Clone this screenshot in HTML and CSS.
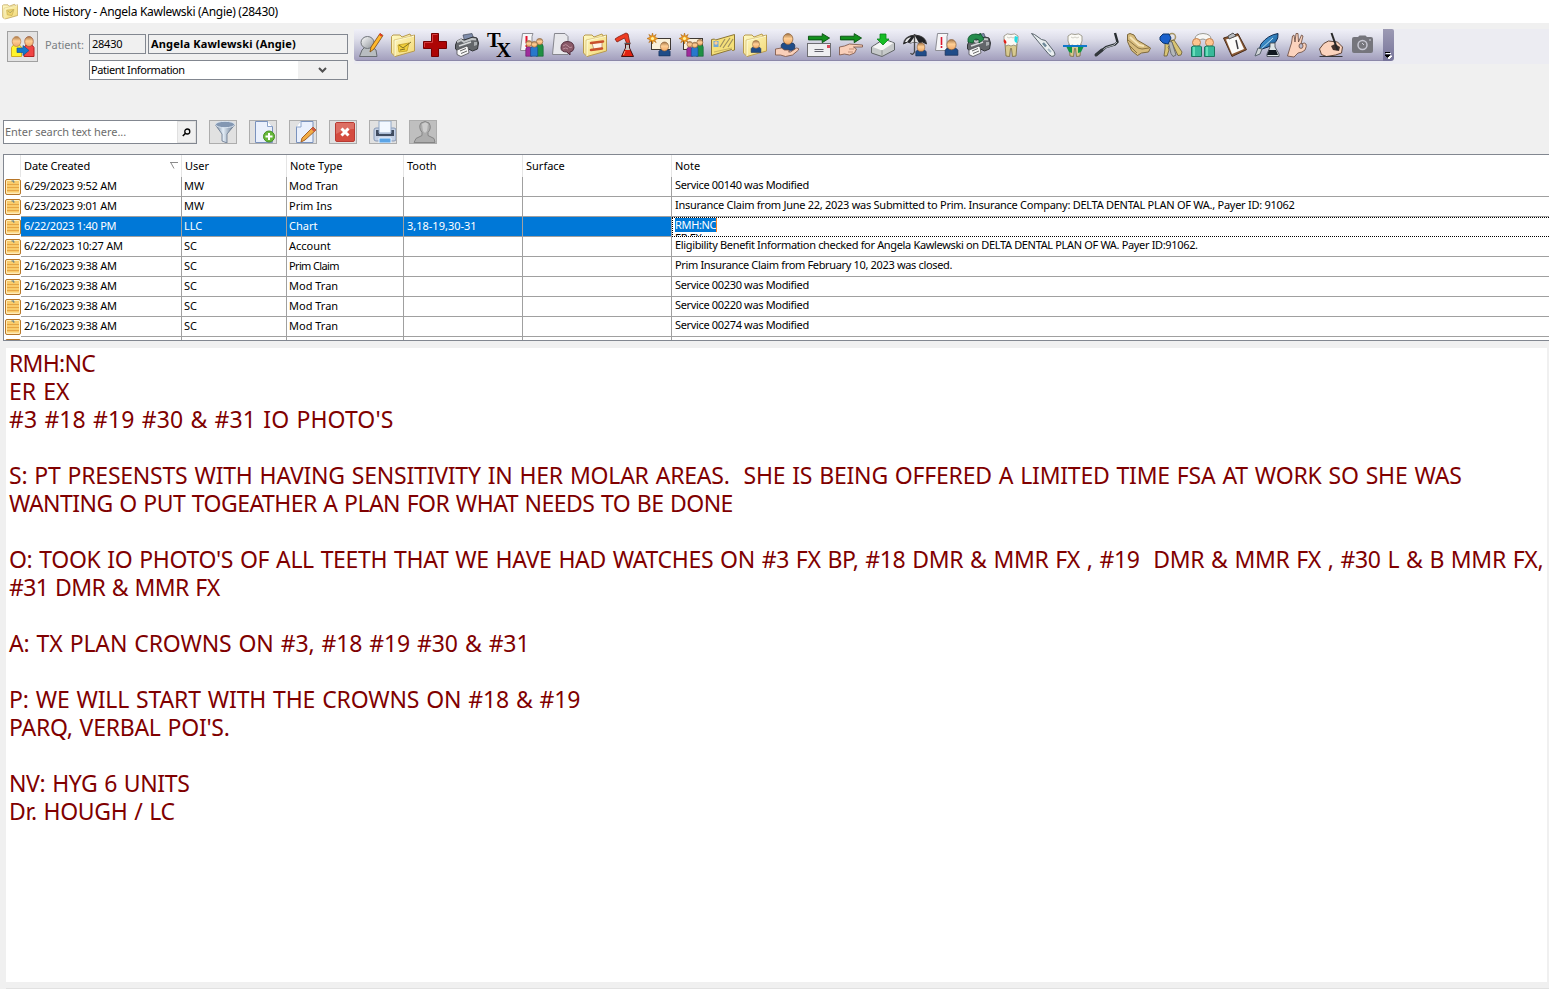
FILE: index.html
```html
<!DOCTYPE html>
<html lang="en">
<head>
<meta charset="utf-8">
<title>Note History</title>
<link rel="stylesheet" href="styles.css">
</head>
<body>
<svg class="defs" width="0" height="0">
  <defs>
    <linearGradient id="gSkin" x1="0" y1="0" x2="0" y2="1"><stop offset="0" stop-color="#a87848"/><stop offset=".45" stop-color="#ffcf95"/><stop offset="1" stop-color="#f0a868"/></linearGradient>
    <linearGradient id="gFold" x1="0" y1="0" x2="1" y2="1"><stop offset="0" stop-color="#fffbc8"/><stop offset="1" stop-color="#f2d774"/></linearGradient>
    <linearGradient id="gGrey" x1="0" y1="0" x2="1" y2="1"><stop offset="0" stop-color="#fff"/><stop offset="1" stop-color="#8d9298"/></linearGradient>
    <linearGradient id="gSteel" x1="0" y1="0" x2="1" y2="0"><stop offset="0" stop-color="#6c7f97"/><stop offset=".4" stop-color="#e3edf7"/><stop offset="1" stop-color="#5d7089"/></linearGradient>
    <linearGradient id="gBlue" x1="0" y1="0" x2="1" y2="1"><stop offset="0" stop-color="#58b8f4"/><stop offset="1" stop-color="#08407c"/></linearGradient>
    <symbol id="folder" viewBox="0 0 24 24"><path d="M.500 3.500L2 2h7l2 2 8-3 1 2 3.500-1v16L4 23.500.500 20z" fill="url(#gFold)" stroke="#b89a4e"/><path d="M4 23V7.500L23 3" fill="none" stroke="#fffde0"/><path d="M3 22V7l18-4" fill="none" stroke="#cdb268" stroke-width=".6"/></symbol>
    <symbol id="person" viewBox="0 0 24 24"><path d="M3 23v-7q1-3 5-3h8q4 0 5 3v7z" fill="#204c88" stroke="#182f55"/><ellipse cx="12" cy="8" rx="6.5" ry="7.2" fill="url(#gSkin)" stroke="#8c6038"/></symbol>
    <symbol id="people" viewBox="0 0 24 24"><g stroke-width=".8"><path d="M1 23v-9q0-3 4-3t4 3v9z" fill="#a02c9c" stroke="#611c66"/><path d="M14 23V11q1-4 5-4t4 4v12z" fill="#209044" stroke="#116030"/><path d="M7 23V13q1-3 5-3t4 3v10z" fill="#2878cc" stroke="#174b84"/><circle cx="5" cy="7" r="3.7" fill="url(#gSkin)" stroke="#8c6038"/><circle cx="18.500" cy="4.500" r="4" fill="url(#gSkin)" stroke="#8c6038"/><circle cx="11.800" cy="8" r="3.700" fill="url(#gSkin)" stroke="#8c6038"/></g></symbol>
    <symbol id="sheet" viewBox="0 0 24 24"><path d="M3.500.500H14l-1 3v14H1.500z" fill="#f6f6f8" stroke="#8d8d94"/></symbol>
    <symbol id="star" viewBox="0 0 12 12"><path d="M6 0l1 3.500L10 1.500 8.500 4.500 12 6 8.500 7.500 10 10.500 7 8.500 6 12 5 8.500 2 10.500 3.500 7.500 0 6l3.500-1.500L2 1.500l3 2z" fill="#f4a020" stroke="#a8600c" stroke-width=".6"/><circle cx="6" cy="6" r="1.700" fill="#fff3a0"/></symbol>
    <symbol id="garrow" viewBox="0 0 24 12"><path d="M.500 3.500h15V.700L23.500 5.500 15.500 10.500V7.500H.500z" fill="#12901c" stroke="#085010"/></symbol>
    <symbol id="printer" viewBox="0 0 24 24"><path d="M8 2l9-1.500 2 6-9 3z" fill="#7f8dab" stroke="#434b5a" stroke-width=".7"/><path d="M.500 12L2 8l4-2 3 1 9-3 4 1 1.500 5-1 6-5 2-4-2-9 3-4-3z" fill="#63666a" stroke="#333539"/><path d="M2 9l4-2 3 2 8-3 4 .500" fill="none" stroke="#c5c8ca" stroke-width="2"/><path d="M4 13l12-4" stroke="#d8dadc" stroke-width="1.500"/><path d="M19 9l3 0v3l-3 1z" fill="#a9adb0"/><path d="M2 17l10-4 1 1 1 6-8 3.500-4-2z" fill="#f8f8f8" stroke="#4c4c50" stroke-width=".8"/><path d="M5 18l6-2.500M6 20.500l6-2.500" stroke="#555" stroke-width=".9"/></symbol>
    <symbol id="tooth" viewBox="0 0 24 24"><path d="M6 11l1 12 3.500.500 1-8h1l1 8 3.500-.500L18 11z" fill="#d8ca90" stroke="#77693c" stroke-width=".8"/><path d="M5 3q3-3.500 7-1.500 4-2 7 1.500 1 5-2 10-2-2-5 0-3-2-5 0Q4 8 5 3z" fill="#fbfaf5" stroke="#8b8878" stroke-width=".8"/><path d="M8 4q2 2 4 0 2 2 4 0" fill="none" stroke="#c5c3b8" stroke-width=".8"/></symbol>
    <symbol id="note" viewBox="0 0 16 16"><rect x=".500" y=".500" width="15" height="15" rx="1.500" fill="#ffedb8" stroke="#b77628"/><rect x="2" y="2" width="12" height="12" fill="#f9cc6c"/><path d="M2 5.500h12M2 8.500h12M2 11.500h12" stroke="#e3a040" stroke-width=".9"/><path d="M2 14h12" stroke="#ffedbb"/><path d="M6.500 2h2.500M8 3h1.500" stroke="#4a7186"/></symbol>
  </defs>
</svg>

<header class="titlebar">
  <svg class="title-icon" viewBox="0 0 24 24"><use href="#folder"/><path d="M7 10l11-1-3 9-7-1z" fill="#efd56e" stroke="#c4a94e"/><path d="M9 11l3 3 5-4" fill="none" stroke="#a59a62" stroke-width="1.200"/></svg>
  <span class="title-text">Note History - Angela Kawlewski (Angie) (28430)</span>
</header>

<section class="top">
  <div class="patient">
    <button class="switch"><svg width="26" height="22" viewBox="0 0 26 22"><path d="M1.500 20.500v-9q1-3 5-3t5 3v9z" fill="#fff42c" stroke="#d1ad24"/><path d="M14 20.500v-9q1-3 5-3t5 3v9z" fill="#f04444" stroke="#af2222"/><ellipse cx="6.500" cy="5.500" rx="4.300" ry="5" fill="url(#gSkin)" stroke="#b9814c" stroke-width=".7"/><ellipse cx="19" cy="5.500" rx="4.300" ry="5" fill="url(#gSkin)" stroke="#9e5538" stroke-width=".7"/><path d="M7 12h6V9.500l6 5-6 5v-3H7z" fill="#1478cc" stroke="#155590" stroke-width=".7"/></svg></button>
    <span class="label">Patient:</span>
    <div class="fields">
      <div class="field-row"><div class="field id">28430</div><div class="field name">Angela Kawlewski (Angie)</div></div>
      <div class="field combo"><span class="combo-text">Patient Information</span><span class="combo-btn"><svg width="9" height="7" viewBox="0 0 9 7"><path d="M1 1l3.500 3.500L8 1" fill="none" stroke="#505050" stroke-width="2"/></svg></span></div>
    </div>
  </div>
  <nav class="toolbar">
    <div class="tools">
      <svg viewBox="0 0 24 24"><path d="M.500 23.500L3 17l3-3h7l4 3 1 6.500z" fill="#b8bdc0" stroke="#676b70"/><ellipse cx="8.500" cy="9.500" rx="6.500" ry="6" fill="url(#gGrey)" stroke="#71757a"/><path d="M21 .500l3 2L15 16l-4 3 1-5z" fill="#ffb82c" stroke="#7a4810" stroke-width=".8"/><path d="M20.500 1l2.500 2" stroke="#e43b26" stroke-width="2"/></svg>
      <svg viewBox="0 0 24 24"><use href="#folder"/><path d="M7 12l11-2-2 8-8 1z" fill="#f0cf3c" stroke="#c19d20" stroke-width=".8"/><path d="M8 12l4 3 8-6M9 17l5-1" fill="none" stroke="#75641e" stroke-width=".9"/></svg>
      <svg viewBox="0 0 24 24"><path d="M8.500.500h7v8h8v7h-8v8h-7v-8h-8v-7h8z" fill="#ad0505" stroke="#740000"/><path d="M9.500 9.500v-8h5M1.500 14v-4.500h8" fill="none" stroke="#d23c3c"/></svg>
      <svg viewBox="0 0 24 24"><use href="#printer"/></svg>
      <svg class="tx" viewBox="0 0 24 24"><text x="0" y="13.500" font-size="20.500">T</text><text x="9" y="24" font-size="21">X</text></svg>
      <svg viewBox="0 0 24 24"><use href="#sheet"/><path d="M7.500 3v7M7.500 12v2" stroke="#e4122c" stroke-width="2"/><use href="#people" x="6" y="5" width="19" height="19"/></svg>
      <svg viewBox="0 0 24 24"><path d="M3.500.500H14l3 3v18H1.500z" fill="#e8e8ec" stroke="#86868e"/><path d="M10 15q0-6 6-6.500 7 0 7 6.500-1 4-4 4l0 3-3-3q-6 0-6-4z" fill="#8a5a68" stroke="#553040"/><path d="M12 13q3-3 5 0t4 1M12 16q3-2 5 0" fill="none" stroke="#bd909e"/></svg>
      <svg viewBox="0 0 24 24"><use href="#folder"/><path d="M9 10l10-1v6l-8 2z" fill="#fff5e8" stroke="#ac7a64" stroke-width=".7"/><path d="M8 10l12-1.500M8 17l11-1.500" stroke="#c9502c" stroke-width="2.500" stroke-linecap="round"/></svg>
      <svg viewBox="0 0 24 24"><path d="M0 6l3-2 8-4 2 1 2 10h-3L9.500 5 2 9z" fill="#ee3c22" stroke="#841c10" stroke-width=".8"/><path d="M10.500 11h4v4l4 8.500H6.500l4-8.500z" fill="#e02010" stroke="#421010"/><path d="M11 12h3v3l1 2h-5l1-2z" fill="#c9c4c0"/><path d="M9.500 10.500h6" stroke="#555" stroke-width="1.500"/><path d="M10 18l-1.500 4" stroke="#ff9c74"/></svg>
      <svg viewBox="0 0 24 24"><rect x="4.500" y="5.500" width="19" height="11" fill="#fbf1da" stroke="#3e3833"/><use href="#star" x="0" y="0" width="11" height="11"/><use href="#person" x="10" y="8" width="15" height="16"/></svg>
      <svg viewBox="0 0 24 24"><rect x="4.500" y="5.500" width="19" height="11" fill="#fbf1da" stroke="#3e3833"/><use href="#star" x="0" y="0" width="11" height="11"/><use href="#people" x="7" y="6" width="18" height="18"/></svg>
      <svg viewBox="0 0 24 24"><path d="M.500 6.500l3-.500 1 1L23.500 1.500V17l-2 .500-1-1L.500 22.500z" fill="#f5e07a" stroke="#8c7634"/><path d="M9 14l5-8M12 15l7-10M17 14l5-8" stroke="#9e9060" stroke-width="1.200"/><path d="M3 19l18-4" stroke="#c9b564"/><rect x="2.500" y="8" width="5" height="6" fill="#72a9d5"/><circle cx="5" cy="10" r="1.700" fill="#ffcf95"/></svg>
      <svg viewBox="0 0 24 24"><use href="#folder"/><use href="#person" x="6" y="7" width="14" height="13"/></svg>
      <svg viewBox="0 0 24 24"><use href="#person" x="4" y="-.500" width="18" height="19"/><path d="M.500 16l6-1 3 2h4q2 1 0 2h2l6-4q3 0 2 2l-6 5-7 1.500-5-1.500H.500z" fill="#f9cfb9" stroke="#795040" stroke-width=".8"/></svg>
      <svg viewBox="0 0 24 24"><use href="#garrow" x="0" y="0" width="24" height="11"/><rect x=".500" y="10.500" width="23" height="13" fill="#eeeef0" stroke="#6d6d72"/><path d="M7.500 16.500h9M7.500 18.500h9" stroke="#62626b"/><path d="M20 12h3v3h-3z" fill="#d94a5a"/></svg>
      <svg viewBox="0 0 24 24"><use href="#garrow" x="0" y="0" width="24" height="11"/><path d="M.500 14l5-1 5-2 13 1v2h-9l3 2-2 4-5 2-5-1-5 1z" fill="#f9cfb9" stroke="#795040" stroke-width=".8"/><path d="M10 16h5M9 19h5" stroke="#ad725d" stroke-width=".7"/></svg>
      <svg viewBox="0 0 24 24"><path d="M.500 14L13 6l10.500 4v7L11 23.500.500 20z" fill="#c6c9c9" stroke="#626668"/><path d="M1.500 14L13 7l9.500 3L11 17.500z" fill="#f5f5f5"/><path d="M11 17v6" stroke="#909393"/><path d="M9 1h6v5h3l-6 6-6-6h3z" fill="#16bd24" stroke="#07851c" stroke-width=".8"/></svg>
      <svg viewBox="0 0 24 24"><path d="M.500 11Q1 3 12 2q11 1 11.500 9l-4-2-4 1-4-1-4 1-3-1z" fill="#202124" stroke="#333"/><path d="M7 10l5-7 4 7-4-1zM2 9q1-4 6-5l-4 5z" fill="#e8e8e8"/><path d="M11.500 1v18q-2 4-4 1" fill="none" stroke="#484848" stroke-width="1.300"/><use href="#person" x="11" y="9" width="14" height="15"/></svg>
      <svg viewBox="0 0 24 24"><use href="#sheet" x="-1"/><path d="M6.500 4v8M6.500 13v2" stroke="#dc1730" stroke-width="1.600"/><use href="#person" x="8" y="5" width="17" height="19"/></svg>
      <svg viewBox="0 0 24 24"><use href="#printer"/><path d="M1 9Q0 1 9 1l4 1V0l4 6-5 4V7Q7 4 6 10z" fill="#248c4c" stroke="#0d542b" stroke-width=".8"/></svg>
      <svg viewBox="0 0 24 24"><use href="#tooth"/><path d="M5 6q3 2 2.500 4L6 11q-2-2-1-5z" fill="#e42018"/><path d="M16 3l3 1-1 6q-4-1-2-7z" fill="#22dbe2"/></svg>
      <svg viewBox="0 0 24 24"><path d="M.500.500l3 1 7 5 4 1 8.500 11q2 3 0 4.500t-5-1.500L10 12z" fill="#e9eef0" stroke="#59636b"/><path d="M12 10l3 3.500" stroke="#6c8798" stroke-width="2.500"/><path d="M17 16l3 3" stroke="#a9bcc8" stroke-width="2"/></svg>
      <svg viewBox="0 0 24 24"><use href="#tooth"/><path d="M3 13h6v7l-3-1zM21 13h-6v7l3-1z" fill="#129645"/><path d="M0 13h24" stroke="#1178c8" stroke-width="2"/></svg>
      <svg viewBox="0 0 24 24"><path d="M1 22l10-8 9-2.500L22.500 9 20 0" fill="none" stroke="#292e32" stroke-width="2.400"/><path d="M2 21.500l9-7 8-2.500L22 9" fill="none" stroke="#b9c0c4" stroke-width=".9"/><path d="M1 22l6-5" stroke="#33383c" stroke-width="3" stroke-linecap="round"/></svg>
      <svg viewBox="0 0 24 24"><path d="M.500 1.500L3 .500l4 1.500 3 5 7 4 6.500 4-2 4-7 1-4 2.500-6-5-4-9z" fill="#d7bc7e" stroke="#7d683c"/><path d="M1 7l10 8 4 1 7-1M3 13l7 7" fill="none" stroke="#8b7442"/><path d="M3 4l9 8 5 1" fill="none" stroke="#f4e3b6" stroke-width="2"/></svg>
      <svg viewBox="0 0 24 24"><circle cx="13" cy="4" r="3.500" fill="none" stroke="#a59566" stroke-width="1.500"/><path d="M6 9h4l1 3-2 2 1 3-2 6H5l1-7z" fill="#d9c474" stroke="#685c35" stroke-width=".8"/><path d="M12 8l3-1 8 12-1 3-3 .500z" fill="#d9c474" stroke="#685c35" stroke-width=".8"/><path d="M9 8l4 1 4 13-3 1.500-2-3z" fill="#b4b7b9" stroke="#5b5e61" stroke-width=".8"/><path d="M1 4l3-3 6 0 2 4-3 6-5-1-3-3z" fill="#1960cc" stroke="#0c3670"/></svg>
      <svg viewBox="0 0 24 24"><path d="M4 6q0-5 8-5.500 8 .500 8 5.500-1 3-4 2-2-2-4-2-3 0-4 2-3 1-4-2z" fill="#f7f7f5" stroke="#9b9b94"/><circle cx="5.500" cy="9.500" r="4" fill="#ffc58f" stroke="#c08150"/><circle cx="18.500" cy="9.500" r="4" fill="#ffc58f" stroke="#c08150"/><path d="M.500 23.500V14l2-1h7l1 1v9.500zM13.500 23.500V14l2-1h7l1 1v9.500z" fill="#38b99a" stroke="#1c765f"/><path d="M3 14v9M16 14v9" stroke="#69deb9" stroke-width="2"/></svg>
      <svg viewBox="0 0 24 24"><path d="M.500 5L15 .700l8.500 16L9 23.500z" fill="#8b5934" stroke="#4b2e1c"/><path d="M3 6.500L15 3l6 13L9 21z" fill="#fbfbfa"/><path d="M5 3l5-3 3 3-7 3z" fill="#b8bbc0" stroke="#555"/><path d="M13 7l2 9" stroke="#3c3c40" stroke-width="1.500"/></svg>
      <svg viewBox="0 0 24 24"><path d="M3 20L6 11Q13 2 23 .500 24 10 13 14l-6 2z" fill="url(#gBlue)" stroke="#102d54"/><path d="M4 18L18 5" stroke="#bae1f2"/><path d="M15 10h5v4l4 7v2.500H12V21l3-7z" fill="#dce4e6" stroke="#3a4048" stroke-width=".8"/><path d="M14 17h7l2 5H12z" fill="#111820"/><path d="M0 23l3-8 4 1-2 5z" fill="#d1d5d8" stroke="#58636c"/></svg>
      <svg viewBox="0 0 24 24"><path d="M.500 23l3-10 1-3 1-7 1.500-1 1 7 1-8.500h2l.500 8.500 3-7 1.500 1-2 8q4-2 5 0t-1 6l-3 2-4 1-4 4z" fill="#fbd3bd" stroke="#66463a" stroke-width=".8"/><ellipse cx="14" cy="13" rx="2" ry="2.400" fill="#bcbcce" stroke="#66463a" stroke-width=".8"/></svg>
      <svg viewBox="0 0 24 24"><path d="M.500 16q4-7 9-8l9 1 5 5-1 6-6 2-9 1.500-5-2z" fill="#fbd3bd" stroke="#513728" stroke-width=".9"/><path d="M12 13l4-2 5 3-1 4-6-1z" fill="#45332d"/><path d="M12.500 0l6 17" stroke="#272727" stroke-width="2"/><path d="M.500 23.500h23" stroke="#343438"/></svg>
      <svg viewBox="0 0 24 24"><path d="M1 6q0-2 2-2h4l1.500-1.500h6L16 4h4q2 0 2 2v12q0 2-2 2H3q-2 0-2-2z" fill="#75757c"/><circle cx="11.500" cy="12" r="4.500" fill="#77777d" stroke="#c7c7d2" stroke-width="1.500"/><path d="M11 10l2 2M18 7h2" stroke="#d5d5e0"/></svg>
    </div>
    <div class="overflow"><svg width="7" height="7" viewBox="0 0 7 7"><path d="M1 1.500h5M1 4h6L4 7z" fill="#fff" stroke="#fff"/><path d="M0 .500h5M0 3h5L2.500 5.500z" fill="#000" stroke="#000"/></svg></div>
  </nav>
</section>

<section class="actions">
  <div class="search"><span class="placeholder">Enter search text here...</span><span class="search-btn"><svg width="9" height="9" viewBox="0 0 9 9"><circle cx="5.300" cy="3.500" r="2.500" fill="none" stroke="#000" stroke-width="1.300"/><path d="M3.500 5.300L.800 8" stroke="#000" stroke-width="1.500"/></svg></span></div>
  <div class="buttons">
    <button><svg viewBox="0 0 26 22"><path d="M5.500 4l6.500 9v7l5 2v-9l7.500-9z" fill="url(#gSteel)" stroke="#65758c" stroke-width=".8"/><ellipse cx="15" cy="3.500" rx="9.500" ry="3.200" fill="#8397b2" stroke="#dae4ef"/></svg></button>
    <button><svg viewBox="0 0 26 22"><path d="M5.500.500h12l5 5v16h-17z" fill="#eaf0fc" stroke="#7a92bd"/><path d="M17.500 0v5.500h5" fill="#fff" stroke="#8ba3ca"/><circle cx="19" cy="15.500" r="5.500" fill="#66b83a" stroke="#468f23"/><path d="M19 12v7M15.500 15.500h7" stroke="#fff" stroke-width="2"/></svg></button>
    <button><svg viewBox="0 0 26 22"><path d="M11 .500h12v21H6.500V6z" fill="#eaf0fc" stroke="#7a92bd"/><path d="M11 0v6H6" fill="#fff" stroke="#8ba3ca"/><path d="M12 17L23 6l3 3-11 10-4 2z" fill="#f1ac45" stroke="#a56228"/><path d="M22 7l3 3" stroke="#ce5844" stroke-width="2.500"/></svg></button>
    <button><svg viewBox="0 0 26 22"><rect x="5.500" y="1.500" width="19" height="19" rx="1.500" fill="#d44c40" stroke="#b83a32"/><path d="M6 2h18v6q-9 0-18 5z" fill="#dd6f64"/><path d="M11.500 7.500l7 7M18.500 7.500l-7 7" stroke="#fff" stroke-width="3"/></svg></button>
    <button><svg viewBox="0 0 26 22"><path d="M4 9q0-2 2-2h18q2 0 2 2v9q0 2-2 2H6q-2 0-2-2z" fill="#c4d0e4" stroke="#8799b6"/><path d="M6 9h3v4h12V9h3v6H6z" fill="#404c60"/><path d="M9 0h12v12H9z" fill="#f3f8ff" stroke="#91a7c5"/><path d="M9 17h12v5H9z" fill="#5ba4e6" stroke="#e9f3ff"/></svg></button>
    <button class="disabled"><svg viewBox="0 0 26 22"><path d="M4 21.500l2-4 6-3v-3Q8 6 11 2q4-3 8 0 3 5-1 9.500v3l6 3 1 4z" fill="#adadad" stroke="#858585"/><path d="M12 3q4-3 6 0l-1 7-2 2-2-2z" fill="#cdcdcd"/></svg></button>
  </div>
</section>

<section class="grid">
  <div class="row head"><span></span><span>Date Created<svg class="sort" width="8" height="7" viewBox="0 0 8 7"><path d="M0 .500h8M1 1l3 5.500" fill="none" stroke="#8a8a8a"/></svg></span><span>User</span><span>Note Type</span><span>Tooth</span><span>Surface</span><span>Note</span></div>
  <div class="row"><span><svg><use href="#note"/></svg></span><span>6/29/2023 9:52 AM</span><span>MW</span><span>Mod Tran</span><span></span><span></span><span>Service 00140 was Modified</span></div>
  <div class="row"><span><svg><use href="#note"/></svg></span><span>6/23/2023 9:01 AM</span><span>MW</span><span>Prim Ins</span><span></span><span></span><span class="long">Insurance Claim from June 22, 2023 was Submitted to Prim. Insurance Company: DELTA DENTAL PLAN OF WA., Payer ID: 91062</span></div>
  <div class="row selected"><span><svg><use href="#note"/></svg></span><span>6/22/2023 1:40 PM</span><span>LLC</span><span>Chart</span><span>3,18-19,30-31</span><span></span><span class="editing"><mark>RMH:NC</mark><br>ER EX</span></div>
  <div class="row"><span><svg><use href="#note"/></svg></span><span>6/22/2023 10:27 AM</span><span>SC</span><span>Account</span><span></span><span></span><span>Eligibility Benefit Information checked for Angela Kawlewski on DELTA DENTAL PLAN OF WA. Payer ID:91062.</span></div>
  <div class="row"><span><svg><use href="#note"/></svg></span><span>2/16/2023 9:38 AM</span><span>SC</span><span class="tight">Prim Claim</span><span></span><span></span><span>Prim Insurance Claim from February 10, 2023 was closed.</span></div>
  <div class="row"><span><svg><use href="#note"/></svg></span><span>2/16/2023 9:38 AM</span><span>SC</span><span>Mod Tran</span><span></span><span></span><span>Service 00230 was Modified</span></div>
  <div class="row"><span><svg><use href="#note"/></svg></span><span>2/16/2023 9:38 AM</span><span>SC</span><span>Mod Tran</span><span></span><span></span><span>Service 00220 was Modified</span></div>
  <div class="row"><span><svg><use href="#note"/></svg></span><span>2/16/2023 9:38 AM</span><span>SC</span><span>Mod Tran</span><span></span><span></span><span>Service 00274 was Modified</span></div>
  <div class="row"><span><svg><use href="#note"/></svg></span><span></span><span></span><span></span><span></span><span></span><span></span></div>
</section>

<main class="detail">
  <p class="l1">RMH:NC</p>
  <p class="l2">ER EX</p>
  <p class="l3">#3 #18 #19 #30 &amp; #31 IO PHOTO'S</p>
  <p></p>
  <p class="l4">S: PT PRESENSTS WITH HAVING SENSITIVITY IN HER MOLAR AREAS.  SHE IS BEING OFFERED A LIMITED TIME FSA AT WORK SO SHE WAS</p>
  <p class="l5">WANTING O PUT TOGEATHER A PLAN FOR WHAT NEEDS TO BE DONE</p>
  <p></p>
  <p class="l6">O: TOOK IO PHOTO'S OF ALL TEETH THAT WE HAVE HAD WATCHES ON #3 FX BP, #18 DMR &amp; MMR FX , #19  DMR &amp; MMR FX , #30 L &amp; B MMR FX,</p>
  <p class="l7">#31 DMR &amp; MMR FX</p>
  <p></p>
  <p class="l8">A: TX PLAN CROWNS ON #3, #18 #19 #30 &amp; #31</p>
  <p></p>
  <p class="l9">P: WE WILL START WITH THE CROWNS ON #18 &amp; #19</p>
  <p class="l10">PARQ, VERBAL POI'S.</p>
  <p></p>
  <p class="l11">NV: HYG 6 UNITS</p>
  <p class="l12">Dr. HOUGH / LC</p>
</main>
<footer class="foot"></footer>
</body>
</html>
```
FILE: styles.css
```css
* { box-sizing: border-box; }
html, body { height: 100%; }
body {
  margin: 0;
  width: 1549px;
  height: 989px;
  overflow: hidden;
  display: flex;
  flex-direction: column;
  background: #f0f0f0;
  color: #000;
  font: 11px/14px "Noto Sans", Tahoma, sans-serif;
}
.defs { position: absolute; }
button { padding: 0; margin: 0; font: inherit; }

.titlebar { height: 23px; flex: none; background: #fff; display: flex; align-items: center; padding-left: 2px; gap: 5px; }
.title-icon { width: 16px; height: 17px; margin-top: -1px; }
.title-text { font-size: 12px; letter-spacing: -0.29px; white-space: nowrap; }

.top { height: 97px; flex: none; display: flex; }
.patient { width: 354px; flex: none; display: flex; padding: 8px 0 0 7px; }
.switch { width: 31px; height: 31px; border: 1px solid #a0a0a0; background: #e3e3e3; display: grid; place-items: center; }
.label { width: 51px; padding: 7px 0 0 7px; color: #7b7f84; white-space: nowrap; letter-spacing: -0.1px; }
.fields { padding-top: 3px; display: flex; flex-direction: column; gap: 6px; width: 259px; }
.field-row { display: flex; gap: 2px; }
.field { height: 20px; border: 1px solid #828790; padding: 2px; white-space: nowrap; }
.id { width: 57px; letter-spacing: -0.25px; }
.name { width: 200px; font-weight: bold; letter-spacing: 0.17px; }
.combo { background: #fff; display: flex; padding: 0; }
.combo-text { flex: 1; padding: 2px 1px; letter-spacing: -0.42px; }
.combo-btn { width: 49px; background: #f0f0f0; display: grid; place-items: center; }

.toolbar { flex: 1; height: 41px; display: flex; align-items: flex-start; padding-top: 6px; background: linear-gradient(#f0f0f0 6px, #ececf2 6px); }
.tools { width: 1029px; height: 32px; padding: 4px 0 0 5px; display: flex; gap: 8px; border-radius: 0 0 0 3px; background: linear-gradient(#f0f0f8 0, #dedeea 30%, #c2c2d6 60%, #a4a0be 96%, #8c88a8 97%); }
.tools svg { width: 24px; height: 24px; flex: none; overflow: visible; }
.tx text { font-family: "Liberation Serif", serif; font-weight: bold; }
.overflow { width: 11px; height: 32px; border-radius: 0 2px 3px 0; background: linear-gradient(#9c9ab4, #77749a); display: flex; align-items: flex-end; justify-content: center; padding-bottom: 2px; }

.actions { height: 34px; flex: none; display: flex; padding-left: 3px; gap: 12px; }
.search { width: 194px; height: 24px; border: 1px solid #828790; background: #fff; display: flex; }
.placeholder { flex: 1; padding: 4px 1px; color: #6d6d6d; white-space: nowrap; letter-spacing: -0.05px; }
.search-btn { width: 19px; background: #f0f0f0; border: 1px solid #e0e0e0; display: grid; place-items: center; }
.buttons { display: flex; gap: 12px; }
.buttons button { width: 28px; height: 24px; border: 1px solid #adadad; background: #e1e1e1; }
.buttons svg { width: 26px; height: 22px; display: block; }
.buttons .disabled { background: #bfbfbf; }

.grid { height: 187px; flex: none; margin-left: 3px; border: 1px solid #828790; border-right: 0; background: #fff; overflow: hidden; }
.row { display: grid; grid-template-columns: 17px 161px 105px 117px 119px 149px 1fr; height: 20px; }
.row span { border-right: 1px solid #a0a0a0; border-bottom: 1px solid #a0a0a0; padding: 2px 0 0 2px; white-space: nowrap; overflow: hidden; }
.row span:nth-child(2) { padding-left: 3px; letter-spacing: -0.24px; }
.row span:nth-child(5) { padding-left: 3px; }
.row .tight { letter-spacing: -0.65px; }
.row span:last-child { border-right: 0; padding: 1px 0 0 3px; letter-spacing: -0.34px; }
.row span.long:last-child { letter-spacing: -0.27px; }
.row span:first-child { padding: 2px 0 0 1px; border: 0; }
.row span:first-child svg { width: 16px; height: 16px; display: block; }
.head { height: 22px; }
.head span, .head span:last-child { border-bottom: 0; border-right-color: #e5e5e5; padding: 4px 0 0 3px; letter-spacing: 0; }
.head span:first-child { border-right: 1px solid #e5e5e5; }
.head span:nth-child(2) { display: flex; justify-content: space-between; padding-right: 3px; letter-spacing: -0.15px; }
.head span:last-child { padding-top: 4px; }
.sort { margin-top: 3px; }
.selected span:not(:first-child):not(.editing) { background: #0078d7; color: #fff; }
.row .editing { border: 1px dotted #000; padding: 0 0 0 2px !important; line-height: 13px; }
mark { background: #0078d7; color: #fff; border-right: 1px solid #ff8728; }

.detail { height: 634px; flex: none; margin: 7px 2px 0 6px; padding: 1px 0 0 3px; background: #fff; color: #800000; font-size: 23px; line-height: 28px; word-spacing: 1.2px; }
.detail p { margin: 0; height: 28px; white-space: pre; }
.l1 { letter-spacing: -0.7px; }
.l3 { letter-spacing: 0.08px; }
.l4 { letter-spacing: -0.22px; }
.l5 { letter-spacing: -0.55px; }
.l6 { letter-spacing: -0.34px; }
.l7 { letter-spacing: -0.6px; }
.l8 { letter-spacing: -0.14px; }
.l9 { letter-spacing: -0.18px; }
.l10 { letter-spacing: -0.26px; }
.l11 { letter-spacing: -0.37px; }
.l12 { letter-spacing: -0.36px; }
.foot { margin: 6px 0 0 6px; height: 1px; flex: none; background: #e1e1e1; }
```
